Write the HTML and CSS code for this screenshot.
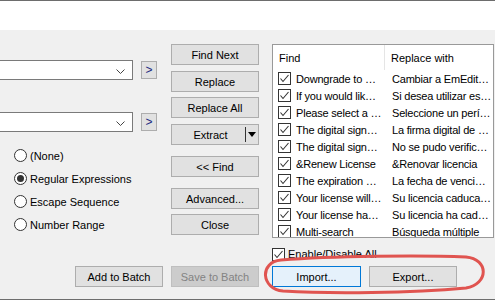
FILE: index.html
```html
<!DOCTYPE html>
<html lang="en">
<head>
  <meta charset="UTF-8">
  <title>Batch Replace</title>
  <link rel="stylesheet" href="styles.css">
</head>
<body>

  <div class="top-band"></div>

  <div class="main">

    <!-- left: combos and options -->
    <div class="col-left">
      <div class="combo-row first">
        <div class="combo">
          <svg class="chev" width="9" height="5" viewBox="0 0 9 5"><polyline points="0.5,0.5 4.5,4.5 8.5,0.5" fill="none" stroke="#444" stroke-width="1"/></svg>
        </div>
        <button class="mini-btn">&gt;</button>
      </div>
      <div class="combo-row second">
        <div class="combo">
          <svg class="chev" width="9" height="5" viewBox="0 0 9 5"><polyline points="0.5,0.5 4.5,4.5 8.5,0.5" fill="none" stroke="#444" stroke-width="1"/></svg>
        </div>
        <button class="mini-btn">&gt;</button>
      </div>

      <div class="radios">
        <label class="radio"><span class="dot"></span>(None)</label>
        <label class="radio"><span class="dot on"></span>Regular Expressions</label>
        <label class="radio"><span class="dot"></span>Escape Sequence</label>
        <label class="radio"><span class="dot"></span>Number Range</label>
      </div>

      <button class="btn push-down">Add to Batch</button>
    </div>

    <!-- middle: action buttons -->
    <div class="col-mid">
      <button class="btn">Find Next</button>
      <button class="btn gap6">Replace</button>
      <button class="btn gap5">Replace All</button>
      <button class="btn gap6 split"><span class="split-label">Extract</span><span class="split-arrow"></span></button>
      <button class="btn gap11">&lt;&lt; Find</button>
      <button class="btn gap11">Advanced...</button>
      <button class="btn gap5">Close</button>
      <button class="btn disabled push-down">Save to Batch</button>
    </div>

    <!-- right: batch list -->
    <div class="col-right">
      <div class="list">
        <div class="list-head">
          <div class="cell c1">Find</div>
          <div class="cell c2">Replace with</div>
        </div>
        <div id="rows"></div>
      </div>

      <label class="enable-all"><span class="check"></span>Enable/Disable All</label>

      <div class="io-buttons">
        <button class="btn focus">Import...</button>
        <button class="btn">Export...</button>
      </div>
    </div>

  </div>

  <!-- red annotation around Import / Export -->
  <svg class="mark" width="230" height="42" viewBox="0 0 230 42">
    <path d="M20 6 C 70 2, 160 1, 205 3 C 228 5, 228 30, 205 34 C 150 39, 70 40, 22 37 C 0 35, -2 8, 20 6 Z" fill="none" stroke="#e05450" stroke-width="3"/>
  </svg>

  <script>
    const items = [
      ["Downgrade to \u2026", "Cambiar a EmEdit\u2026"],
      ["If you would lik\u2026", "Si desea utilizar es\u2026"],
      ["Please select a \u2026", "Seleccione un perí\u2026"],
      ["The digital sign\u2026", "La firma digital de \u2026"],
      ["The digital sign\u2026", "No se pudo verific\u2026"],
      ["&Renew License", "&Renovar licencia"],
      ["The expiration \u2026", "La fecha de venci\u2026"],
      ["Your license will\u2026", "Su licencia caduca\u2026"],
      ["Your license ha\u2026", "Su licencia ha cad\u2026"],
      ["Multi-search", "Búsqueda múltiple"]
    ];

    const rows = document.getElementById('rows');
    items.forEach(([find, repl]) => {
      const row = document.createElement('div');
      row.className = 'row';
      row.innerHTML = `
        <div class="cell c1"><span class="check"></span><span class="txt"></span></div>
        <div class="cell c2"><span class="txt"></span></div>
      `;
      row.querySelectorAll('.txt')[0].textContent = find;
      row.querySelectorAll('.txt')[1].textContent = repl;
      rows.appendChild(row);
    });

    // same tick in every checkbox
    const tick = '<svg width="11" height="11" viewBox="0 0 11 11"><polyline points="1.5,5.5 4,8.5 9.5,2" fill="none" stroke="#333" stroke-width="1.1"/></svg>';
    document.querySelectorAll('.check').forEach(c => c.innerHTML = tick);
  </script>
</body>
</html>
```

FILE: styles.css
```css
* {
  box-sizing: border-box;
}

body {
  margin: 0;
  width: 495px;
  height: 300px;
  overflow: hidden;
  position: relative;
  background: #f0f0f0;
  font-family: 'Liberation Sans', Arial, sans-serif;
  font-size: 11px;
  color: #000;
}

.top-band {
  height: 30px;
  background: #fff;
  border-top: 1px solid #6d6d6d;
}

.main {
  display: flex;
  height: 270px;
  padding: 14px 0 12px;
  border-bottom: 1px solid #6d6d6d;
}

/* buttons */
.btn {
  display: block;
  width: 88px;
  height: 21px;
  padding: 0;
  border: 1px solid #adadad;
  background: #e1e1e1;
  font: inherit;
  color: #000;
}

.btn.disabled {
  background: #cccccc;
  border-color: #bfbfbf;
  color: #838383;
}

.btn.focus {
  background: #e5f1fb;
  border-color: #0078d7;
}

.gap5 { margin-top: 5px; }
.gap6 { margin-top: 6px; }
.gap11 { margin-top: 11px; }

.push-down {
  margin-top: auto;
}

.split {
  display: flex;
  align-items: center;
}

.split-label {
  flex: 1;
  padding-left: 4px;
}

.split-arrow {
  width: 13px;
  height: 15px;
  border-left: 1px solid #333;
  position: relative;
}

.split-arrow::after {
  content: '';
  position: absolute;
  left: 2px;
  top: 5px;
  border-left: 4px solid transparent;
  border-right: 4px solid transparent;
  border-top: 5px solid #000;
}

/* left column */
.col-left {
  width: 163px;
  margin-right: 8px;
  display: flex;
  flex-direction: column;
}

.col-left .push-down {
  align-self: flex-end;
}

.combo-row {
  display: flex;
  align-items: center;
  height: 20px;
}

.combo-row.first { margin-top: 16px; }
.combo-row.second { margin-top: 32px; }

.combo {
  margin-left: -20px;
  width: 153px;
  height: 20px;
  background: #fff;
  border: 1px solid #7a7a7a;
  position: relative;
}

.chev {
  position: absolute;
  right: 7px;
  top: 8px;
}

.mini-btn {
  margin-left: 8px;
  width: 16px;
  height: 18px;
  padding: 0 0 1px;
  border: 1px solid #adadad;
  background: #e1e1e1;
  font: inherit;
  font-size: 12px;
  color: #1a2a80;
}

.radios {
  margin-top: 12px;
  padding-left: 14px;
}

.radio {
  display: flex;
  align-items: center;
  height: 23px;
}

.dot {
  width: 13px;
  height: 13px;
  margin-right: 3px;
  border: 1px solid #333;
  border-radius: 50%;
  background: #fff;
  position: relative;
}

.dot.on::after {
  content: '';
  position: absolute;
  left: 2px;
  top: 2px;
  width: 7px;
  height: 7px;
  border-radius: 50%;
  background: #333;
}

/* middle column */
.col-mid {
  width: 88px;
  margin-right: 13px;
  display: flex;
  flex-direction: column;
}

/* right column */
.col-right {
  width: 222px;
  display: flex;
  flex-direction: column;
}

.list {
  height: 194px;
  border: 1px solid #999;
  background: #fff;
  overflow: hidden;
}

.list-head {
  display: flex;
  height: 25px;
}

.list-head .cell {
  display: flex;
  align-items: center;
}

.list-head .c1 {
  width: 112px;
  padding-left: 6px;
  border-right: 1px solid #e5e5e5;
}

.list-head .c2 {
  padding-left: 6px;
}

.row {
  display: flex;
  height: 17px;
}

.cell {
  white-space: nowrap;
  overflow: hidden;
}

.row .cell {
  display: flex;
  align-items: center;
  letter-spacing: -0.2px;
}

.row .c1 {
  width: 112px;
  padding-left: 5px;
}

.row .c2 {
  flex: 1;
  padding-left: 7px;
}

.check {
  width: 13px;
  height: 13px;
  margin-right: 5px;
  border: 1px solid #333;
  background: #fff;
  display: flex;
  align-items: center;
  justify-content: center;
  flex-shrink: 0;
}

.enable-all {
  display: flex;
  align-items: center;
  height: 14px;
  margin-top: 9px;
}

.enable-all .check {
  margin-right: 3px;
}

.io-buttons {
  margin-top: auto;
  display: flex;
  gap: 8px;
}

.io-buttons .btn.focus {
  width: 89px;
}

/* annotation drawn over the window */
.mark {
  position: absolute;
  left: 261px;
  top: 254px;
}
```
